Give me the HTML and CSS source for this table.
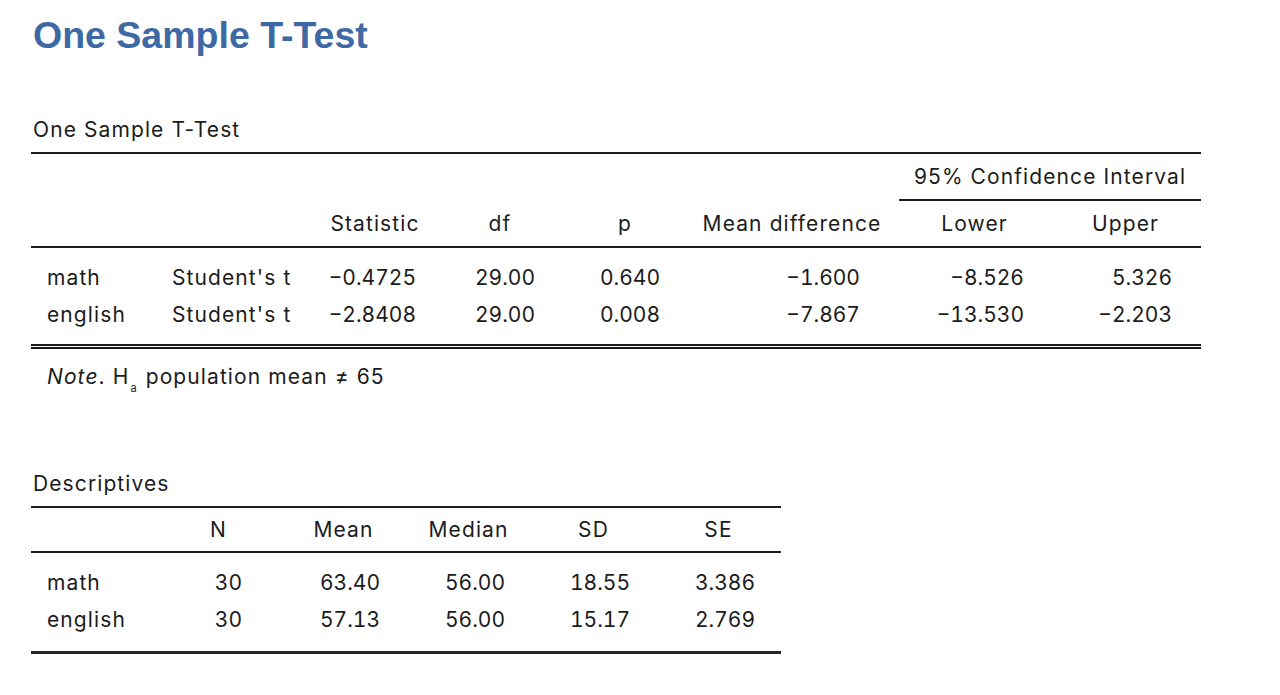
FILE: index.html
```html
<!DOCTYPE html>
<html>
<head>
<meta charset="utf-8">
<link rel="stylesheet" href="styles.css">
</head>
<body>
<div class="page">
  <h1 class="title">One Sample T-Test</h1>

  <div class="result ttest">
    <div class="caption">One Sample T-Test</div>
    <table class="grid">
      <colgroup>
        <col style="width:126px"><col style="width:158px"><col style="width:120px"><col style="width:130px">
        <col style="width:120px"><col style="width:214px"><col style="width:151px"><col style="width:151px">
      </colgroup>
      <thead>
        <tr class="super">
          <th colspan="6"></th>
          <th colspan="2" class="ci">95% Confidence Interval</th>
        </tr>
        <tr class="head">
          <th></th><th></th>
          <th>Statistic</th><th>df</th><th>p</th><th>Mean difference</th><th>Lower</th><th>Upper</th>
        </tr>
      </thead>
      <tbody>
        <tr class="first">
          <td class="lbl">math</td><td class="lbl2">Student's t</td>
          <td class="num c3">−0.4725</td><td class="num c4">29.00</td><td class="num c5">0.640</td>
          <td class="num c6">−1.600</td><td class="num c7">−8.526</td><td class="num c8">5.326</td>
        </tr>
        <tr class="last">
          <td class="lbl">english</td><td class="lbl2">Student's t</td>
          <td class="num c3">−2.8408</td><td class="num c4">29.00</td><td class="num c5">0.008</td>
          <td class="num c6">−7.867</td><td class="num c7">−13.530</td><td class="num c8">−2.203</td>
        </tr>
      </tbody>
    </table>
    <div class="note"><i>Note</i>. H<sub>a</sub> population mean ≠ 65</div>
  </div>

  <div class="result desc">
    <div class="caption">Descriptives</div>
    <table class="grid single">
      <colgroup>
        <col style="width:125px"><col style="width:125px"><col style="width:125px">
        <col style="width:125px"><col style="width:125px"><col style="width:125px">
      </colgroup>
      <thead>
        <tr class="head short">
          <th></th><th>N</th><th>Mean</th><th>Median</th><th>SD</th><th>SE</th>
        </tr>
      </thead>
      <tbody>
        <tr class="first">
          <td class="lbl">math</td><td class="num n">30</td><td class="num d">63.40</td><td class="num d">56.00</td><td class="num d">18.55</td><td class="num d">3.386</td>
        </tr>
        <tr class="last">
          <td class="lbl">english</td><td class="num n">30</td><td class="num d">57.13</td><td class="num d">56.00</td><td class="num d">15.17</td><td class="num d">2.769</td>
        </tr>
      </tbody>
    </table>
  </div>
</div>
</body>
</html>
```
FILE: styles.css
```css
html, body {
  margin: 0;
  padding: 0;
  background: #ffffff;
}
body {
  font-family: "Inter", "Liberation Sans", sans-serif;
  color: #1c1c1c;
}
.page {
  padding-left: 31px;
  display: flex;
  flex-direction: column;
  align-items: flex-start;
}
.title {
  font-family: "Liberation Sans", Arial, sans-serif;
  font-weight: 700;
  font-size: 37.5px;
  line-height: 44px;
  color: #3f69a5;
  margin: 13px 0 0 2px;
}
.caption {
  font-size: 21px;
  letter-spacing: 1.1px;
  line-height: 24px;
  padding-left: 2px;
  margin-bottom: 10px;
}
.ttest { margin-top: 61px; }
.desc { margin-top: 83px; }
.grid {
  table-layout: fixed;
  border-collapse: separate;
  border-spacing: 0;
  border-top: 2px solid #1c1c1c;
  border-bottom: 5px double #1c1c1c;
  font-size: 21px;
  letter-spacing: 1.1px;
}
.grid.single {
  border-bottom: 3px solid #262626;
}
.ttest .grid { width: 1170px; }
.desc .grid { width: 750px; }
th {
  font-weight: 400;
  text-align: center;
  padding: 0;
  white-space: nowrap;
}
.super th { height: 45px; }
.super .ci { border-bottom: 2px solid #1c1c1c; }
.head th {
  height: 45px;
  border-bottom: 2px solid #1c1c1c;
}
.head.short th { height: 43px; }
td {
  height: 37px;
  padding: 0;
  white-space: nowrap;
}
.first td { padding-top: 11px; }
.last td { padding-bottom: 11px; }
.desc .last td { padding-bottom: 13px; }
.lbl { padding-left: 16px; }
.lbl2 { padding-left: 15px; }
.num {
  text-align: right;
  letter-spacing: 0;
  font-variant-numeric: tabular-nums;
}
.c3 { padding-right: 19px; }
.c4 { padding-right: 30px; }
.c5 { padding-right: 25px; }
.c6 { padding-right: 39px; }
.c7 { padding-right: 26px; }
.c8 { padding-right: 29px; }
.n { padding-right: 39px; }
.d { padding-right: 26px; }
.note {
  font-size: 21px;
  letter-spacing: 1.1px;
  line-height: 24px;
  padding: 16px 0 0 16px;
}
.note sub {
  font-size: 11px;
  letter-spacing: 0;
  vertical-align: -8px;
  line-height: 0;
  margin-left: 1px;
  margin-right: 2px;
}
```
